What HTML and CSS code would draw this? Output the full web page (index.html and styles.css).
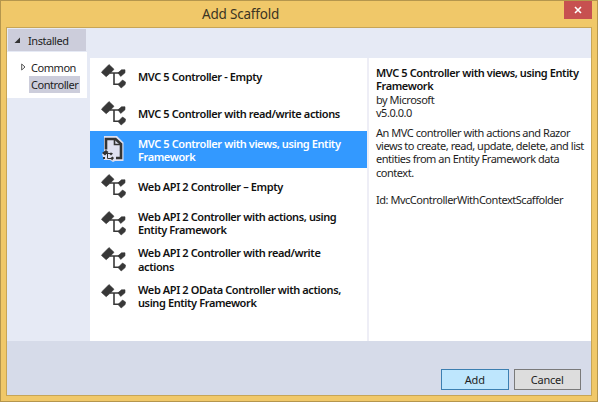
FILE: index.html
```html
<!DOCTYPE html>
<html lang="en">
<head>
<meta charset="utf-8">
<title>Add Scaffold</title>
<link rel="stylesheet" href="styles.css">
</head>
<body>
<svg width="0" height="0" class="defs">
  <symbol id="tree" viewBox="0 0 26 26">
    <path d="M9 10h12M13 10v11.200h8" fill="none" stroke="#383838" stroke-width="1.6"/>
    <path d="M8 1.500l5 4.800-2.200 2.400-5.600 5L.5 9.500l1-1.500z M17 9.800l3.500-3h3.500v3l-4.300 3.600z M17 21.500l4.500-4.500 3 2-.3 2.500-4 3.500z" fill="#383838" stroke="#383838" stroke-width=".6" stroke-linejoin="round"/>
  </symbol>
</svg>
<div class="window">
  <header class="titlebar">
    <h1 class="title">Add Scaffold</h1>
    <button class="close" aria-label="Close"><svg width="8" height="8" viewBox="0 0 8 8"><path d="M1 1l6 6M7 1L1 7" stroke="#fff" stroke-width="1.6"/></svg></button>
  </header>
  <div class="client">
    <div class="body">
      <nav class="sidebar">
        <div class="installed"><svg width="7" height="7" viewBox="0 0 7 7"><path d="M6 .5V6H.5z" fill="#333"/></svg><span>Installed</span></div>
        <div class="nodes">
          <div class="node"><svg width="5" height="8" viewBox="0 0 5 8"><path d="M.7 1v6l3.300-3z" fill="none" stroke="#555"/></svg><span>Common</span></div>
          <div class="node"><span class="current">Controller</span></div>
        </div>
      </nav>
      <main class="panes">
        <ul class="list">
          <li><svg class="icon"><use href="#tree"/></svg><span>MVC 5 Controller - Empty</span></li>
          <li><svg class="icon"><use href="#tree"/></svg><span>MVC 5 Controller with read/write actions</span></li>
          <li class="selected"><svg class="icon" viewBox="0 0 26 26">
            <path d="M3 0h13l6.500 6.500V25H14l-2 1-3-2H3l-2-6 2-2z" fill="#dfe1f1"/>
            <path d="M5 13.500V3h9.500l5.500 5v14h-5" fill="none" stroke="#343434" stroke-width="2.600"/>
            <path d="M13.500 2v6.500H20" fill="none" stroke="#343434" stroke-width="1.600"/>
            <path d="M1 17l4-3 2.500 2-3.500 3.500zM8 17.500l2-1 2 1-2 2zM9.500 22l2-1.500 1.500 1.500-2 2.500zM2 21h2v2H2z" fill="#343434"/>
            <path d="M5 17.500h4M6.500 18v4.500H10" fill="none" stroke="#343434"/>
          </svg><span>MVC 5 Controller with views, using Entity<br>Framework</span></li>
          <li><svg class="icon"><use href="#tree"/></svg><span>Web API 2 Controller – Empty</span></li>
          <li><svg class="icon"><use href="#tree"/></svg><span>Web API 2 Controller with actions, using<br>Entity Framework</span></li>
          <li><svg class="icon"><use href="#tree"/></svg><span>Web API 2 Controller with read/write<br>actions</span></li>
          <li><svg class="icon"><use href="#tree"/></svg><span>Web API 2 OData Controller with actions,<br>using Entity Framework</span></li>
        </ul>
        <section class="details">
          <h2>MVC 5 Controller with views, using Entity<br>Framework</h2>
          <p>by Microsoft<br>v5.0.0.0</p>
          <p class="about">An MVC controller with actions and Razor<br>views to create, read, update, delete, and list<br>entities from an Entity Framework data<br>context.</p>
          <p class="ident">Id: MvcControllerWithContextScaffolder</p>
        </section>
      </main>
    </div>
    <footer class="footer">
      <button class="btn primary">Add</button>
      <button class="btn">Cancel</button>
    </footer>
  </div>
</div>
</body>
</html>
```
FILE: styles.css
```css
* { box-sizing: border-box; }
body { margin: 0; background: #fff; font-family: "Noto Sans", "Open Sans", sans-serif; font-size: 11px; color: #1e1e1e; }
h1, h2, p, ul { margin: 0; padding: 0; font-size: inherit; font-weight: normal; }
button { font: inherit; padding: 0; margin: 0; border-radius: 0; color: inherit; }
svg { display: block; flex: none; }
.defs { position: absolute; }
.window { width: 598px; height: 402px; border: 1px solid #b5964d; background: #f0c869; padding: 0 5px 5px; display: flex; flex-direction: column; }
.titlebar { height: 26px; flex: none; position: relative; }
.title { padding-left: 196px; font-size: 13.500px; line-height: 27px; letter-spacing: -.2px; color: #3b3423; white-space: nowrap; }
.close { position: absolute; right: 0; top: 0; width: 28px; height: 18px; border: 0; background: #c75050; display: flex; align-items: center; justify-content: center; }
.client { flex: 1; border: 1px solid #c7a556; display: flex; flex-direction: column; }
.body { height: 313px; display: flex; background: #e6eaf5; }
.sidebar { width: 83px; flex: none; padding-top: 1px; font-size: 11px; letter-spacing: -.45px; white-space: nowrap; }
.installed { height: 22px; margin-left: 1px; width: 78px; background: #cccddb; display: flex; align-items: center; padding-left: 6px; gap: 7px; }
.nodes { background: #fff; margin-top: 1px; width: 80px; height: 46px; padding-top: 7px; }
.node { height: 17px; padding-left: 22px; line-height: 17px; position: relative; }
.node svg { position: absolute; left: 14px; top: 4px; }
.node span { padding: 0 2px; display: inline-block; height: 17px; }
.node .current { background: #cccddb; width: 51px; }
.panes { flex: 1; min-width: 0; margin-top: 30px; background: #fff; display: flex; }
.list { width: 277px; flex: none; list-style: none; font-weight: 600; line-height: 13.400px; letter-spacing: -.4px; white-space: nowrap; color: #111; }
.list li { height: 36.600px; display: flex; align-items: center; padding-left: 11px; gap: 11px; }
.list span { padding-top: 1px; }
.icon { width: 26px; height: 26px; }
.list .selected { background: #3399ff; color: #fff; }
.details { flex: 1; min-width: 0; border-left: 2px solid #eeeef6; padding: 8px 0 0 7px; line-height: 13.400px; letter-spacing: -.47px; white-space: nowrap; }
.details h2 { font-weight: 600; letter-spacing: -.4px; color: #111; }
.about { margin-top: 6px; }
.ident { margin-top: 14px; }
.footer { flex: 1; background: #d6dbe9; display: flex; justify-content: flex-end; gap: 5px; padding: 28px 10px 0 0; }
.btn { width: 67.500px; height: 21px; border: 1px solid #7a7a7a; background: #ddd; line-height: 18px; letter-spacing: -.2px; }
.btn.primary { border-color: #3c7fb1; background: #bee6fd; }
```
